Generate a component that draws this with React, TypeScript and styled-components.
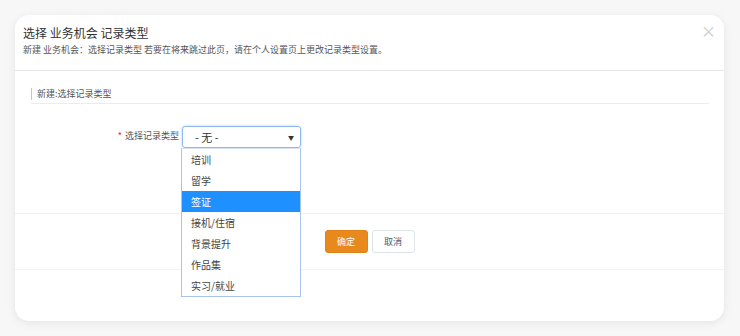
import styled, { createGlobalStyle } from 'styled-components';

const GlobalStyle = createGlobalStyle`
  html, body {
    margin: 0;
    padding: 0;
    background: #f7f7f7;
    font-family: "Noto Sans CJK SC", "Noto Sans", sans-serif;
  }
`;

const options = ['培训', '留学', '签证', '接机/住宿', '背景提升', '作品集', '实习/就业'];

const App = () => {
  return (
    <Page>
      <GlobalStyle />
      <Card>
        <Header>
          <Title>选择 业务机会 记录类型</Title>
          <SubTitle>新建 业务机会：选择记录类型 若要在将来跳过此页，请在个人设置页上更改记录类型设置。</SubTitle>
          <Close>×</Close>
        </Header>
        <Body>
          <Section>新建:选择记录类型</Section>
          <FormRow>
            <Label>
              <Star>*</Star>选择记录类型
            </Label>
            <SelectWrap>
              <Select>
                <span>- 无 -</span>
                <Arrow>▼</Arrow>
              </Select>
              <DropList>
                {options.map((o) => (
                  <Option key={o} active={o === '签证'}>
                    {o}
                  </Option>
                ))}
              </DropList>
            </SelectWrap>
          </FormRow>
        </Body>
        <Footer>
          <Button primary>确定</Button>
          <Button>取消</Button>
        </Footer>
      </Card>
    </Page>
  );
};

const Page = styled.div`
  width: 740px;
  height: 336px;
  padding: 15px 16px 15px 15px;
  box-sizing: border-box;
`;

const Card = styled.div`
  background: #fff;
  border-radius: 14px;
  box-shadow: 0 2px 10px rgba(0, 0, 0, 0.08);
  height: 306px;
  display: flex;
  flex-direction: column;
`;

const Header = styled.div`
  position: relative;
  height: 56px;
  box-sizing: border-box;
  padding: 10px 8px 0 8px;
  border-bottom: 1px solid #e6e6e6;
`;

const Title = styled.div`
  font-size: 12px;
  color: #333;
  line-height: 16px;
`;

const SubTitle = styled.div`
  margin-top: 3px;
  font-size: 9px;
  color: #555;
  line-height: 12px;
`;

const Close = styled.div`
  position: absolute;
  right: 8px;
  top: 8px;
  font-size: 15px;
  color: #c8c8c8;
  line-height: 16px;
`;

const Body = styled.div`
  height: 143px;
  box-sizing: border-box;
  padding: 17px 15px 0 15px;
  border-bottom: 1px solid #f0f0f0;
`;

const Section = styled.div`
  font-size: 9px;
  color: #555;
  line-height: 12px;
  padding-left: 5px;
  border-left: 1px solid #c5c5c5;
  margin-left: 1px;
  position: relative;
  &::after {
    content: '';
    position: absolute;
    left: -1px;
    right: 0;
    bottom: -4px;
    border-bottom: 1px solid #ececec;
  }
`;

const FormRow = styled.div`
  display: flex;
  align-items: flex-start;
  margin-top: 26px;
`;

const Label = styled.div`
  width: 149px;
  text-align: right;
  padding-right: 3px;
  font-size: 9px;
  color: #555;
  line-height: 14px;
  padding-top: 3px;
`;

const Star = styled.span`
  color: #e02020;
  margin-right: 3px;
`;

const SelectWrap = styled.div`
  position: relative;
  width: 119px;
`;

const Select = styled.div`
  height: 22px;
  box-sizing: border-box;
  border: 1px solid #8fb8ec;
  border-radius: 3px;
  box-shadow: 0 0 3px rgba(80, 150, 230, 0.4);
  display: flex;
  align-items: center;
  justify-content: space-between;
  padding: 0 6px 0 12px;
  font-size: 11px;
  color: #333;
`;

const Arrow = styled.span`
  font-size: 6px;
  color: #333;
`;

const DropList = styled.div`
  position: absolute;
  left: -1px;
  top: 22px;
  width: 120px;
  box-sizing: border-box;
  background: #fff;
  border: 1px solid #a9c4ec;
  border-top-color: #d6e2f5;
  z-index: 5;
`;

const Option = styled.div<{ active?: boolean }>`
  height: 21px;
  line-height: 21px;
  padding-left: 9px;
  font-size: 10px;
  color: ${(p) => (p.active ? '#fff' : '#444')};
  background: ${(p) => (p.active ? '#1e90ff' : '#fff')};
`;

const Footer = styled.div`
  height: 55px;
  display: flex;
  align-items: center;
  justify-content: center;
  gap: 4px;
  border-bottom: 1px solid #f3f3f3;
`;

const Button = styled.div<{ primary?: boolean }>`
  width: 43px;
  height: 23px;
  box-sizing: border-box;
  border-radius: 3px;
  display: flex;
  align-items: center;
  justify-content: center;
  font-size: 9px;
  color: ${(p) => (p.primary ? '#fff' : '#4a5a78')};
  background: ${(p) => (p.primary ? '#e8891d' : '#fff')};
  border: 1px solid ${(p) => (p.primary ? '#e0811a' : '#dfe3ea')};
`;

export default App;
